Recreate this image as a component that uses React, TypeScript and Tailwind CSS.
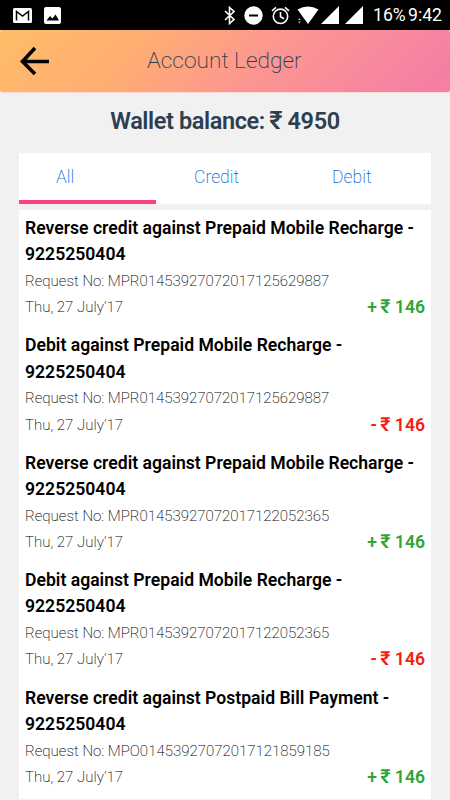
type Entry = { title: string; request: string; credit: boolean };

const entries: Entry[] = [
  { title: "Reverse credit against Prepaid Mobile Recharge -", request: "MPR01453927072017125629887", credit: true },
  { title: "Debit against Prepaid Mobile Recharge -", request: "MPR01453927072017125629887", credit: false },
  { title: "Reverse credit against Prepaid Mobile Recharge -", request: "MPR01453927072017122052365", credit: true },
  { title: "Debit against Prepaid Mobile Recharge -", request: "MPR01453927072017122052365", credit: false },
  { title: "Reverse credit against Postpaid Bill Payment -", request: "MPO01453927072017121859185", credit: true },
];

function StatusBar() {
  return (
    <div className="flex h-[30px] items-center bg-black pl-[13px] pr-[6px] text-white">
      <svg width="19" height="15" viewBox="0 0 19 15">
        <rect width="19" height="15" rx="1.5" fill="#fff" />
        <path d="M3.500 12.500V3.500l6 4.500L15.500 3.500v9" fill="none" stroke="#000" strokeWidth="1.500" />
      </svg>
      <svg className="ml-3" width="17" height="17" viewBox="0 0 17 17">
        <rect width="17" height="17" rx="2" fill="#fff" />
        <path d="M2.500 13.500l3.500-4.500 2.500 2.500 3-4 3.500 6z" fill="#000" />
      </svg>
      <div className="grow" />
      <svg width="12" height="19" viewBox="0 0 12 19" fill="none" stroke="#fff" strokeWidth="1.600">
        <path d="M1 5l9 8.500-4.500 4V1.500L10 5.500 1 14" />
      </svg>
      <svg className="ml-[8px]" width="19" height="19" viewBox="0 0 19 19">
        <circle cx="9.500" cy="9.500" r="9.200" fill="#fff" />
        <path d="M5 9.500h9" stroke="#000" strokeWidth="2" />
      </svg>
      <svg className="ml-[8px]" width="19" height="19" viewBox="0 0 19 19" fill="none" stroke="#fff" strokeWidth="1.600">
        <circle cx="9.500" cy="10.300" r="7.200" />
        <path d="M9.500 6v4.800l3.500 2M1 4.800L5 1.300M18 4.800l-4-3.500" />
      </svg>
      <svg className="ml-[7px]" width="22" height="18" viewBox="0 0 22 18">
        <path d="M.5 3.500Q11-2.500 21.500 3.500L11 18z" fill="#fff" />
        <path d="M1 14l1.500-2L4 14zM1 15.500h3L2.500 17.500z" fill="#aaa" />
      </svg>
      <svg className="ml-[2px]" width="18" height="18" viewBox="0 0 18 18">
        <path d="M18 0v18H0z" fill="#fff" />
      </svg>
      <svg className="ml-[6px]" width="18" height="18" viewBox="0 0 18 18">
        <path d="M18 0v18H0z" fill="#fff" />
      </svg>
      <span className="ml-[10px] w-[35px] whitespace-nowrap text-[17.600px] leading-[30px]">16%</span>
      <span className="w-[36px] whitespace-nowrap text-[17.600px] leading-[30px]">9:42</span>
    </div>
  );
}

function Header() {
  return (
    <header className="flex h-[62px] items-center rounded-[2px] bg-[linear-gradient(135deg,#ffbd69_0%,#ffae72_30%,#fc9691_58%,#f57fa5_95%)] pl-5 shadow-[0_1px_1px_#ffd9d3]">
      <svg width="29" height="30" viewBox="0 0 29 30" fill="none" stroke="#000" strokeWidth="3.600">
        <path d="M15 2L2.500 15.500 15 28M2.500 15.500H29" />
      </svg>
      <h1 className="ml-[98px] whitespace-nowrap text-[22.700px] font-extralight text-[#263c49]">Account Ledger</h1>
    </header>
  );
}

function LedgerRow({ title, request, credit }: Entry) {
  return (
    <li className="h-[117.400px] px-[6px] pt-[5px]">
      <h2 className="whitespace-nowrap text-[17.600px] font-semibold leading-[26.300px] text-black">
        {title}
        <br />
        9225250404
      </h2>
      <p className="pt-[0.400px] text-[15px] font-extralight leading-[26.300px] text-black">Request No: {request}</p>
      <div className="flex h-[26.300px] justify-between leading-[26.300px]">
        <span className="text-[15px] font-extralight text-black">Thu, 27 July'17</span>
        <span className={credit ? "text-[17.600px] font-semibold text-[#32a435]" : "text-[17.600px] font-semibold text-[#f51e0f]"}>
          {credit ? "+" : "-"} <span className="-ml-px text-[19.500px] leading-none">₹</span> 146
        </span>
      </div>
    </li>
  );
}

export default function App() {
  return (
    <div className="h-[800px] w-[450px] overflow-hidden bg-[#f1f1f1] font-['Roboto',sans-serif]">
      <StatusBar />
      <Header />
      <div className="flex h-[60.500px] items-center justify-center pb-[2px] text-[23.500px] font-semibold tracking-[-0.400px] text-[#2c3e50]">
        <span>
          Wallet balance: <span className="-ml-px text-[25.500px] leading-none">₹</span> 4950
        </span>
      </div>
      <nav className="mx-[19px] flex h-[51.500px] bg-white text-[17.600px] font-extralight text-[#0b64d8]">
        <span className="w-[137px] border-b-4 border-[#f7437f] pl-[37px] leading-[49px]">All</span>
        <span className="w-[138px] pl-[38px] leading-[49px]">Credit</span>
        <span className="pl-[38px] leading-[49px]">Debit</span>
      </nav>
      <ul className="mx-[19px] mt-[6px] h-[588.500px] bg-white">
        {entries.map((entry, i) => (
          <LedgerRow key={i} {...entry} />
        ))}
      </ul>
    </div>
  );
}
